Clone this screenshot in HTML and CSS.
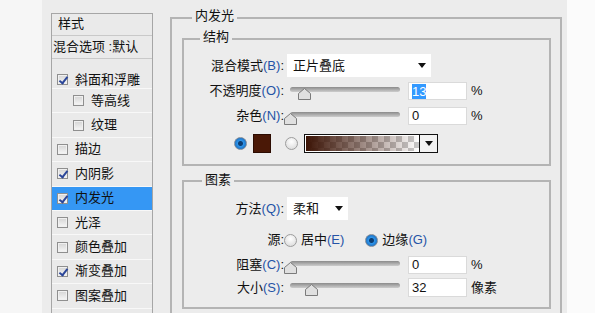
FILE: index.html
```html
<!DOCTYPE html>
<html>
	<head>
		<meta charset="UTF-8">
		<title>图层样式 - 内发光</title>
		<link rel="stylesheet" href="styles.css">
	</head>
	<body>
		<div class="dialog">
			<div class="edge"></div>
			<ul class="styles">
				<li class="head">样式</li>
				<li class="head">混合选项 :默认</li>
				<li class="item first"><span class="cb on"></span>斜面和浮雕</li>
				<li class="item sub"><span class="cb"></span>等高线</li>
				<li class="item sub"><span class="cb"></span>纹理</li>
				<li class="item"><span class="cb"></span>描边</li>
				<li class="item"><span class="cb on"></span>内阴影</li>
				<li class="item ac"><span class="cb on"></span>内发光</li>
				<li class="item"><span class="cb"></span>光泽</li>
				<li class="item"><span class="cb"></span>颜色叠加</li>
				<li class="item"><span class="cb on"></span>渐变叠加</li>
				<li class="item"><span class="cb"></span>图案叠加</li>
				<li class="item"><span class="cb"></span>外发光</li>
			</ul>
			<div class="main">
				<div class="group outer">
					<span class="title">内发光</span>
					<div class="group struct">
						<span class="title">结构</span>
						<div class="row r1">
							<label class="lbl">混合模式<em>(B)</em>:</label>
							<div class="select wide"><span>正片叠底</span><i class="arrow"></i></div>
						</div>
						<div class="row r2">
							<label class="lbl">不透明度<em>(O)</em>:</label>
							<div class="slider">
								<svg class="thumb" style="left:13%" width="13" height="12" viewBox="0 0 13 12"><path d="M6.5 0.5 L12.5 5.5 V11.5 H0.5 V5.5 Z" fill="#e0e0e0" stroke="#7b7b7b"/></svg>
							</div>
							<div class="field"><span class="sel">13</span></div>
							<span class="unit">%</span>
						</div>
						<div class="row r3">
							<label class="lbl">杂色<em>(N)</em>:</label>
							<div class="slider">
								<svg class="thumb" style="left:0%" width="13" height="12" viewBox="0 0 13 12"><path d="M6.5 0.5 L12.5 5.5 V11.5 H0.5 V5.5 Z" fill="#e0e0e0" stroke="#7b7b7b"/></svg>
							</div>
							<div class="field">0</div>
							<span class="unit">%</span>
						</div>
						<div class="row r4">
							<i class="radio on"></i>
							<i class="swatch"></i>
							<i class="radio"></i>
							<div class="gradient">
								<span class="ramp"></span>
								<span class="drop"><i class="arrow"></i></span>
							</div>
						</div>
					</div>
					<div class="group elems">
						<span class="title">图素</span>
						<div class="row r5">
							<label class="lbl">方法<em>(Q)</em>:</label>
							<div class="select narrow"><span>柔和</span><i class="arrow"></i></div>
						</div>
						<div class="row r6">
							<label class="lbl">源:</label>
							<i class="radio"></i>
							<span class="opt">居中<em>(E)</em></span>
							<i class="radio on second"></i>
							<span class="opt">边缘<em>(G)</em></span>
						</div>
						<div class="row r7">
							<label class="lbl">阻塞<em>(C)</em>:</label>
							<div class="slider">
								<svg class="thumb" style="left:0%" width="13" height="12" viewBox="0 0 13 12"><path d="M6.5 0.5 L12.5 5.5 V11.5 H0.5 V5.5 Z" fill="#e0e0e0" stroke="#7b7b7b"/></svg>
							</div>
							<div class="field">0</div>
							<span class="unit">%</span>
						</div>
						<div class="row r8">
							<label class="lbl">大小<em>(S)</em>:</label>
							<div class="slider">
								<svg class="thumb" style="left:19%" width="13" height="12" viewBox="0 0 13 12"><path d="M6.5 0.5 L12.5 5.5 V11.5 H0.5 V5.5 Z" fill="#e0e0e0" stroke="#7b7b7b"/></svg>
							</div>
							<div class="field">32</div>
							<span class="unit">像素</span>
						</div>
					</div>
				</div>
			</div>
			<div class="side"></div>
		</div>
	</body>
</html>
```

FILE: styles.css
```css
*{
	margin: 0;
	padding: 0;
	box-sizing: border-box;
}
li{
	list-style: none;
}
body{
	width: 595px;
	height: 313px;
	overflow: hidden;
	font-family: "Liberation Sans", "Noto Sans CJK SC", sans-serif;
	font-size: 13px;
	line-height: 16px;
	color: #111;
	background: #ececec;
}
.dialog{
	display: flex;
	height: 313px;
}
.edge{
	width: 42px;
	background: #f6f6f6;
}

/* left list */
.styles{
	width: 102px;
	height: 330px;
	margin: 13px 0 0 9px;
	border: 1px solid #a6a6a6;
	background: #eaeaea;
}
.styles .head{
	height: 22px;
	line-height: 19px;
	padding-left: 6px;
	border-bottom: 1px solid #c9c9c9;
}
.styles .head + .head{
	height: 23px;
	line-height: 22px;
	padding-left: 1px;
}
.styles .item{
	display: flex;
	align-items: center;
	height: 24.4px;
	padding-left: 5px;
	border-bottom: 1px solid #f8f8f8;
}
.styles .first{
	height: 30px;
	padding-top: 12px;
}
.styles .sub{
	padding-left: 21px;
}
.styles .ac{
	background: #3597f4;
}
.cb{
	position: relative;
	width: 11px;
	height: 11px;
	margin-right: 7px;
	border: 1px solid #8f8f8f;
	background: linear-gradient(#d4d4d4, #f7f7f7);
	box-shadow: inset 0 0 0 1px #f0f0f0;
}
.cb.on::after{
	content: "";
	position: absolute;
	left: 3px;
	top: 0;
	width: 3px;
	height: 7px;
	border: solid #2b4699;
	border-width: 0 2px 2px 0;
	transform: rotate(38deg);
}

/* right panel */
.main{
	width: 392px;
	margin-left: 17px;
	padding-top: 17px;
}
.group{
	position: relative;
	border: 2px solid #b4b4b4;
}
.outer{
	height: 300px;
	border-bottom: none;
	padding: 19px 9px 0 10px;
}
.title{
	position: absolute;
	padding: 0 3px;
	background: #ececec;
}
.outer > .title{
	top: -11px;
	left: 20px;
}
.struct{
	padding: 14px 0 11px;
}
.struct > .title{
	top: -11px;
	left: 16px;
}
.elems{
	margin-top: 14px;
	padding: 15px 0 10px;
}
.elems > .title{
	top: -10px;
	left: 18px;
}
.row{
	display: flex;
	align-items: center;
}
.r1{
	height: 23px;
}
.r2{
	height: 18px;
	margin-top: 5px;
}
.r3{
	height: 18px;
	margin-top: 7px;
}
.r4{
	height: 19px;
	margin-top: 9px;
	padding-left: 50px;
}
.r5{
	height: 23px;
}
.r6{
	height: 18px;
	margin-top: 11px;
}
.r7{
	height: 18px;
	margin-top: 7px;
}
.r8{
	height: 19px;
	margin-top: 4px;
}
.lbl{
	width: 100px;
	text-align: right;
	white-space: nowrap;
}
.lbl em,
.opt em{
	font-style: normal;
	color: #2553a6;
}
.select{
	display: flex;
	align-items: center;
	justify-content: space-between;
	align-self: stretch;
	margin-left: 3px;
	padding: 0 5px 0 6px;
	background: #fff;
}
.wide{
	width: 144px;
}
.narrow{
	width: 61px;
}
.arrow{
	width: 0;
	height: 0;
	border-left: 4px solid transparent;
	border-right: 4px solid transparent;
	border-top: 5px solid #111;
}
.slider{
	position: relative;
	align-self: flex-start;
	width: 110px;
	height: 5px;
	margin: 5px 8px 0 6px;
	border-radius: 3px;
	background: linear-gradient(#8b8b8b, #cdcdcd);
}
.thumb{
	position: absolute;
	top: 1px;
	margin-left: -6px;
}
.field{
	display: flex;
	align-items: center;
	align-self: stretch;
	width: 59px;
	padding-left: 3px;
	background: #fff;
	border: 1px solid #dadada;
}
.sel{
	background: #3399ff;
	color: #fff;
	line-height: 15px;
}
.unit{
	margin-left: 4px;
}
.radio{
	width: 13px;
	height: 13px;
	border-radius: 50%;
	border: 1px solid #9d9d9d;
	background: radial-gradient(circle at 50% 35%, #fff, #d6d6d6);
}
.radio.on{
	border-color: #7f8b99;
	background: radial-gradient(circle, #0c3d72 0 2px, #2f95ea 3px, #1b6ec0 6px);
}
.swatch{
	width: 18px;
	height: 19px;
	margin: 0 14px 0 6px;
	background: #4a1806;
	border: 1px solid #2c0c02;
}
.gradient{
	display: flex;
	width: 134px;
	height: 19px;
	margin-left: 6px;
	padding: 1px 0 1px 1px;
	border: 1px solid #111;
	background: #fff;
}
.ramp{
	flex: 1;
	background: linear-gradient(to right, #3c1406, rgba(60, 20, 6, 0)), conic-gradient(#c9c9c9 25%, #fff 0 50%, #c9c9c9 0 75%, #fff 0) 0 0/12px 12px;
}
.drop{
	display: flex;
	align-items: center;
	justify-content: center;
	width: 18px;
	margin: -1px 0;
	border-left: 1px solid #111;
	background: #f2f2f2;
}
.opt{
	margin-left: 4px;
}
.radio.second{
	margin-left: 21px;
}
.side{
	flex: 1;
	margin-left: 5px;
	background: #fbfbfb;
}
```
